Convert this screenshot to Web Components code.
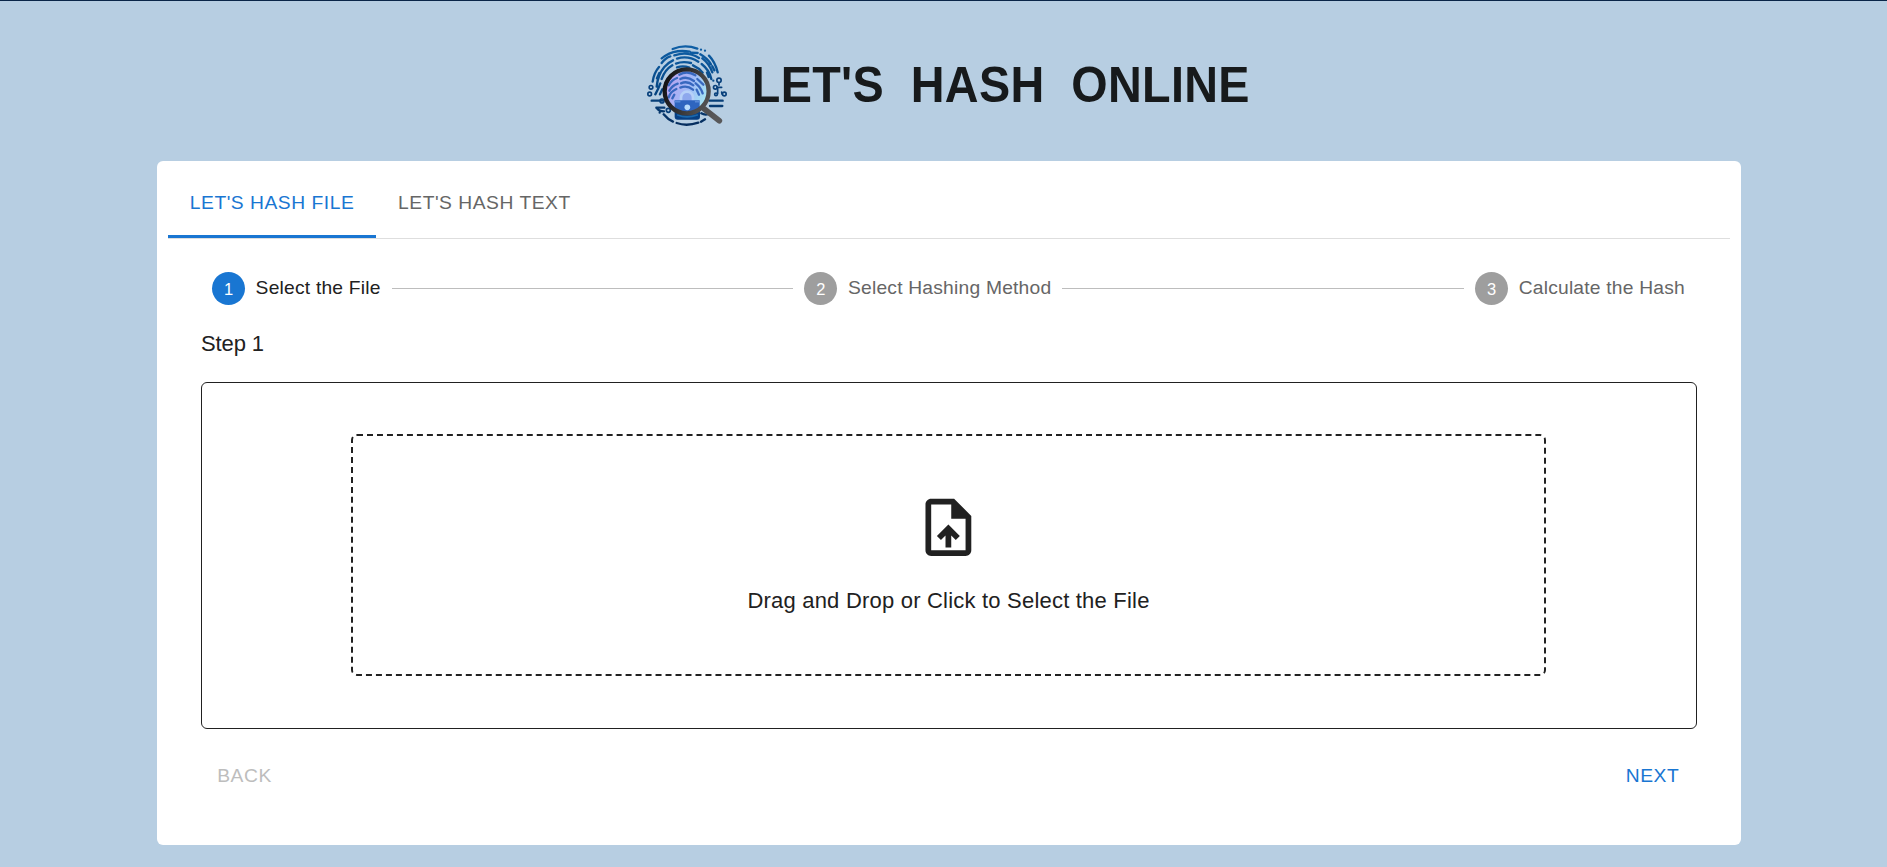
<!DOCTYPE html>
<html lang="en">
<head>
<meta charset="utf-8">
<title>Let's Hash Online</title>
<style>
html, body { margin: 0; height: 100%; overflow: hidden; }
body { font-family: "Liberation Sans", Arial, sans-serif; color: #212121; }
</style>
</head>
<body>
<hash-app></hash-app>
<script>
const define = (name, html) => customElements.define(name, class extends HTMLElement {
  constructor() {
    super();
    const t = document.createElement('template');
    t.innerHTML = html;
    this.attachShadow({ mode: 'open' }).append(t.content.cloneNode(true));
  }
});

define('hash-logo', `
<style>:host{display:block;width:82.67px;height:82.67px}svg{display:block;width:100%;height:100%}</style>
<svg viewBox="33 30 248 248" fill="none" stroke-linecap="round">
<defs>
<linearGradient id="p" x1="0" x2="0" y1="30" y2="275" gradientUnits="userSpaceOnUse"><stop stop-color="#0f5fa6"/><stop offset=".5" stop-color="#084a88"/><stop offset="1" stop-color="#052c5c"/></linearGradient>
<linearGradient id="g" x1="98" y1="140" x2="215" y2="190" gradientUnits="userSpaceOnUse"><stop stop-color="#b9a5ef"/><stop offset=".5" stop-color="#a2b9f7"/><stop offset="1" stop-color="#a4e4f4"/></linearGradient>
<linearGradient id="r" x1="90" y1="150" x2="255" y2="210" gradientUnits="userSpaceOnUse"><stop stop-color="#141416"/><stop offset=".65" stop-color="#4b4b4d"/><stop offset="1" stop-color="#58585a"/></linearGradient>
</defs>
<g stroke="url(#p)" stroke-width="7">
<path d="M113 42Q150 27 187 41M198 44v.1M210 47v.1M91 62Q122 43 164 50M168 53L188 54M80 70L88 64M80 84Q92 68 106 64M118 61Q158 48 192 69M196 58Q216 69 228 88M222 62Q241 82 248 112M238 106Q236 101 232 94M53 140Q57 113 72 96M65 155Q69 118 88 96Q99 83 114 76M126 71Q158 60 190 80M200 87Q224 106 229 132M80 132Q90 104 112 91M123 86Q142 78 168 84M202 70Q222 85 232 112M216 113L221 126M61 178Q70 162 76 145M75 178L82 163M66 130L73 114M174 91Q192 99 203 113M126 97Q145 91 163 98M235 137v.1"/>
<path d="M74 233v.1M86 238Q98 253 114 260M125 264Q155 275 190 263M198 260L210 253M199 235Q212 243 229 234M88 218h-24M87 229Q72 229 66 220M224 197h39M225 213h37M50 197h31"/>
</g>
<g stroke="#08407b" stroke-width="5"><circle cx="48" cy="157" r="5.5"/><circle cx="44" cy="177" r="5.5"/><circle cx="81" cy="198" r="6"/><circle cx="100" cy="226" r="6"/><circle cx="252" cy="136" r="6.5"/><circle cx="241" cy="157" r="5.5"/><circle cx="268" cy="177" r="5.5"/><circle cx="243" cy="178" r="4"/><path d="M252 143v7M246 157h14M248 176v-16M261 177l-1-6"/></g>
<rect x="119" y="210" width="76" height="44" rx="9" fill="#073f83"/><path d="M128 240Q155 251 187 240" stroke="#1b68ac" stroke-width="5"/>
<path d="M207 221L253 257" stroke="url(#r)" stroke-width="17"/>
<circle cx="155" cy="169" r="65" fill="url(#g)"/>
<g stroke="#3868bf" stroke-width="7"><path d="M133 119Q157 105 181 121M101 151Q111 134 126 129M136 132Q156 122 177 138M187 132L205 149M103 167Q112 151 128 146M138 145Q157 136 175 151M101 187Q106 170 124 162M136 158Q156 150 174 164M182 145Q197 156 203 175M185 164L192 179M112 190L118 179"/></g>
<path d="M138 199v-11a18 18 0 0 1 36 0v11" fill="#8ea8ed" stroke="#b6d0f8" stroke-width="8"/>
<path d="M119 196h75v22q-15 15-38 15t-37-14z" fill="#2e65bf"/><path d="M120 200h14M182 200h10" stroke="#5889d8" stroke-width="5"/>
<circle cx="157" cy="217" r="8.5" fill="#b8dcfb"/>
<circle cx="155" cy="169" r="66" stroke="url(#r)" stroke-width="13"/>
</svg>`);

define('hash-header', `
<style>:host{display:flex;justify-content:center;align-items:center;gap:23px;height:82px;padding:44px 0 0 9px}
h1{margin:-1px 0 0;font-size:46.75px;line-height:58px;font-weight:700;letter-spacing:.00735em;color:#171a1c;white-space:pre;transform:scaleY(1.06);transform-origin:50% 46px}</style>
<hash-logo></hash-logo><h1><slot></slot></h1>`);

define('hash-tab', `
<style>:host{display:flex;align-items:center;box-sizing:border-box;height:66px;padding:0 22px 1px 21.8px;font-size:19.25px;line-height:24px;letter-spacing:.027em;color:#666;border-bottom:3px solid transparent;white-space:nowrap;cursor:pointer}
:host([selected]){color:#1976d2;border-color:#1976d2}</style><span><slot></slot></span>`);

define('hash-tabs', `
<style>:host{display:flex;border-bottom:1px solid #dedede}</style><slot></slot>`);

define('hash-step', `
<style>:host{display:flex;align-items:center;gap:10.6px;font-size:19.25px;line-height:27.5px;letter-spacing:.01071em;color:#666;white-space:nowrap}
.n{display:flex;align-items:center;justify-content:center;width:33px;height:33px;border-radius:50%;background:#9e9e9e;color:#fff;font-size:16.5px;line-height:20px;letter-spacing:0}
.n ::slotted(*){padding-top:1px}
.t{margin-top:-2px}
:host([active]){color:#212121}:host([active]) .n{background:#1976d2}</style>
<span class="n"><slot name="number"></slot></span><span class="t"><slot></slot></span>`);

define('hash-stepper', `
<style>:host{display:flex;align-items:center;gap:11px;padding:0 12px 0 11px}
::slotted(hr){flex:1;margin:0;border:0;height:1px;background:#bdbdbd}</style><slot></slot>`);

define('hash-dropzone', `
<style>:host{display:flex;box-sizing:border-box;height:347px;border:1px solid #212121;border-radius:6px;padding:51px 0 0 149px}
.zone{display:flex;flex-direction:column;align-items:center;box-sizing:border-box;width:1195px;height:242px;border:2px dashed #212121;border-radius:6px;padding-top:57px}
svg{display:block;width:68.75px;height:68.75px;fill:#212121}
p{margin:22px 0 0;font-size:22px;line-height:33px;letter-spacing:.00938em}</style>
<div class="zone"><svg viewBox="0 0 24 24"><path d="M14 2H6c-1.1 0-1.99.9-1.99 2L4 20c0 1.1.89 2 1.99 2H18c1.1 0 2-.9 2-2V8l-6-6zm4 18H6V4h7v5h5v11zM8 15.01l1.41 1.41L11 14.84V19h2v-4.16l1.59 1.59L16 15.01 12.01 11 8 15.01z"/></svg><p><slot></slot></p></div>`);

define('hash-button', `
<style>:host{display:block}
button{display:block;width:88px;height:50px;border:0;padding:0 1px 0 0;background:none;font:19.25px/33px "Liberation Sans",Arial,sans-serif;letter-spacing:.02857em;color:#1976d2;cursor:pointer}
:host([disabled]) button{color:#bdbdbd}</style><button><slot></slot></button>`);

define('hash-app', `
<style>
:host{display:block;box-sizing:border-box;height:100%;border-top:1px solid #0a2548;background:#b7cee2}
main{box-sizing:border-box;width:1584px;height:684px;margin:34px auto 0 157px;padding:11px;border-radius:6px;background:#fff}
.body{padding:33px 33px 0}
p{margin:22px 0;font-size:22px;line-height:33px;letter-spacing:-.005em}
nav{display:flex;justify-content:space-between;padding-top:21px}
</style>
<hash-header>LET'S&nbsp; HASH&nbsp; ONLINE</hash-header>
<main>
<hash-tabs><hash-tab selected>LET'S HASH FILE</hash-tab><hash-tab>LET'S HASH TEXT</hash-tab></hash-tabs>
<div class="body">
<hash-stepper><hash-step active><span slot="number">1</span>Select the File</hash-step><hr><hash-step><span slot="number">2</span>Select Hashing Method</hash-step><hr><hash-step><span slot="number">3</span>Calculate the Hash</hash-step></hash-stepper>
<p>Step 1</p>
<hash-dropzone>Drag and Drop or Click to Select the File</hash-dropzone>
<nav><hash-button disabled>BACK</hash-button><hash-button>NEXT</hash-button></nav>
</div>
</main>`);
</script>
</body>
</html>
